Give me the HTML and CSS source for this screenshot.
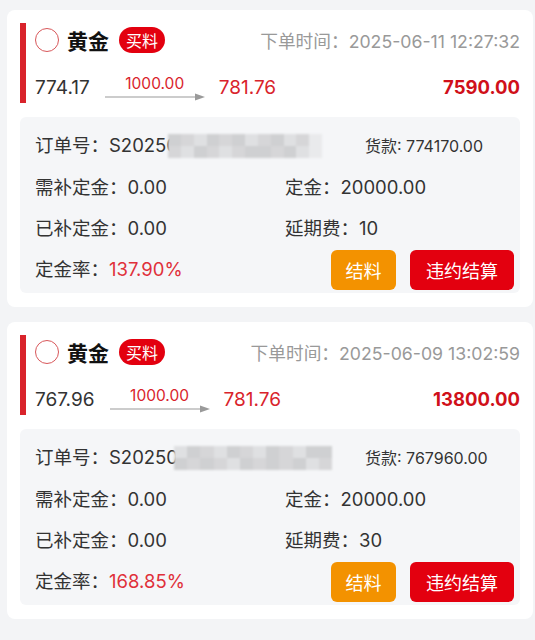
FILE: index.html
```html
<!DOCTYPE html>
<html lang="zh-CN">
<head>
<meta charset="utf-8">
<link rel="stylesheet" href="styles.css">
</head>
<body>
<div class="list">
  <div class="card">
    <div class="head">
      <div class="title-row">
        <span class="circle"></span>
        <span class="name">黄金</span>
        <span class="badge">买料</span>
        <span class="time">下单时间：2025-06-11 12:27:32</span>
      </div>
      <div class="price-row">
        <span class="open">774.17</span>
        <span class="arrow">
          <span class="qty">1000.00</span>
          <svg class="arrow-svg" width="100" height="8" viewBox="0 0 100 8"><line x1="0" y1="4" x2="92" y2="4" stroke="#9a9a9a" stroke-width="1.2"/><polygon points="90,0.5 100,4 90,7.5" fill="#9a9a9a"/></svg>
        </span>
        <span class="now">781.76</span>
        <span class="total">7590.00</span>
      </div>
    </div>
    <div class="box">
      <div class="row">
        <div class="cell">订单号：S2025<span class="tail">0</span><span class="mosaic m-a"><i class="g2"></i><i class="g1"></i><i class="g3"></i><i class="g2"></i><i class="g1"></i><i class="g2"></i><i class="g3"></i><i class="g1"></i><i class="g2"></i><i class="g3"></i><i class="g1"></i><i class="g4"></i><i class="g1"></i><i class="g3"></i><i class="g2"></i><i class="g1"></i><i class="g3"></i><i class="g1"></i><i class="g2"></i><i class="g2"></i><i class="g1"></i><i class="g2"></i><i class="g3"></i><i class="g4"></i></span></div>
        <div class="cell small-cell"><span class="small">货款: 774170.00</span></div>
      </div>
      <div class="row">
        <div class="cell">需补定金：0.00</div>
        <div class="cell">定金：20000.00</div>
      </div>
      <div class="row">
        <div class="cell">已补定金：0.00</div>
        <div class="cell">延期费：10</div>
      </div>
      <div class="row last">
        <div class="cell">定金率：<span class="rate">137.90%</span></div>
        <div class="btns">
          <span class="btn btn-orange">结料</span>
          <span class="btn btn-red">违约结算</span>
        </div>
      </div>
    </div>
  </div>

  <div class="card">
    <div class="head">
      <div class="title-row">
        <span class="circle"></span>
        <span class="name">黄金</span>
        <span class="badge">买料</span>
        <span class="time">下单时间：2025-06-09 13:02:59</span>
      </div>
      <div class="price-row">
        <span class="open">767.96</span>
        <span class="arrow">
          <span class="qty">1000.00</span>
          <svg class="arrow-svg" width="100" height="8" viewBox="0 0 100 8"><line x1="0" y1="4" x2="92" y2="4" stroke="#9a9a9a" stroke-width="1.2"/><polygon points="90,0.5 100,4 90,7.5" fill="#9a9a9a"/></svg>
        </span>
        <span class="now">781.76</span>
        <span class="total">13800.00</span>
      </div>
    </div>
    <div class="box">
      <div class="row">
        <div class="cell">订单号：S2025<span class="tail">0</span><span class="mosaic m-b"><i class="g3"></i><i class="g2"></i><i class="g1"></i><i class="g3"></i><i class="g2"></i><i class="g1"></i><i class="g3"></i><i class="g2"></i><i class="g1"></i><i class="g3"></i><i class="g2"></i><i class="g2"></i><i class="g2"></i><i class="g1"></i><i class="g2"></i><i class="g1"></i><i class="g3"></i><i class="g2"></i><i class="g1"></i><i class="g2"></i><i class="g1"></i><i class="g2"></i><i class="g3"></i><i class="g1"></i></span></div>
        <div class="cell small-cell"><span class="small">货款: 767960.00</span></div>
      </div>
      <div class="row">
        <div class="cell">需补定金：0.00</div>
        <div class="cell">定金：20000.00</div>
      </div>
      <div class="row">
        <div class="cell">已补定金：0.00</div>
        <div class="cell">延期费：30</div>
      </div>
      <div class="row last">
        <div class="cell">定金率：<span class="rate">168.85%</span></div>
        <div class="btns">
          <span class="btn btn-orange">结料</span>
          <span class="btn btn-red">违约结算</span>
        </div>
      </div>
    </div>
  </div>
</div>
</body>
</html>
```
FILE: styles.css
```css
* { box-sizing: border-box; }
html, body {
  margin: 0;
  padding: 0;
  background: #f3f4f6;
}
body {
  font-family: "Inter", "Noto Sans CJK SC", sans-serif;
  color: #333;
  width: 535px;
  overflow: hidden;
}
.list {
  padding: 10px 2px 0 7px;
}
.card {
  background: #fff;
  border-radius: 8px;
  padding: 13px 13px 14px 13px;
  margin-bottom: 15px;
}
.head {
  border-left: 6px solid #d9232b;
  height: 80px;
  display: flex;
  flex-direction: column;
}
.title-row {
  height: 34px;
  display: flex;
  align-items: center;
  padding-left: 9px;
}
.circle {
  width: 24px;
  height: 24px;
  border: 1.5px solid #d8575a;
  border-radius: 50%;
  flex: none;
}
.name {
  margin-left: 8px;
  font-size: 21px;
  font-weight: 700;
  color: #111;
  font-family: "Noto Sans CJK SC", sans-serif;
}
.badge {
  margin-left: 10px;
  background: #e3000f;
  color: #fff;
  font-size: 16px;
  line-height: 26px;
  height: 26px;
  padding: 0 7px;
  border-radius: 13px;
  font-family: "Noto Sans CJK SC", sans-serif;
}
.time {
  margin-left: auto;
  font-size: 17.7px;
  color: #999;
}
.price-row {
  margin-top: 14px;
  height: 32px;
  display: flex;
  align-items: center;
  padding-left: 9px;
  font-size: 19px;
}
.open { color: #333; }
.arrow {
  display: inline-flex;
  flex-direction: column;
  align-items: center;
  margin: 0 14px 0 15px;
  position: relative;
  top: 1px;
}
.qty {
  font-size: 15.5px;
  color: #d9232b;
  line-height: 16px;
}
.arrow-svg { display: block; margin-top: 1px; }
.now { color: #d9232b; }
.total {
  margin-left: auto;
  color: #d0101a;
  font-weight: 700;
  font-size: 18.5px;
}
.box {
  margin-top: 14px;
  background: #f5f6f8;
  border-radius: 6px;
  padding: 7px 6px 5px 15px;
}
.row {
  display: grid;
  grid-template-columns: 250px 1fr;
  height: 41px;
  align-items: center;
  font-size: 18.5px;
}
.cell { white-space: nowrap; }
.small-cell { padding-left: 80px; }
.small { font-size: 16px; }
.tail { display: inline-block; }
.mosaic {
  display: inline-grid;
  grid-template-columns: repeat(12, 1fr);
  grid-template-rows: 12px 12px;
  vertical-align: middle;
  width: 154px;
  margin-left: -10px;
  filter: blur(1px);
}
.mosaic i { display: block; }
.m-b { width: 158px; margin-left: -4px; }
.g1 { background: #d6d6d8; }
.g2 { background: #cfd0d2; }
.g3 { background: #dfe0e2; }
.g4 { background: #e9eaec; }
.rate { color: #e0303a; }
.row.last {
  display: flex;
  justify-content: space-between;
}
.btns {
  display: flex;
  gap: 14px;
  margin-top: 4px;
}
.btn {
  height: 40px;
  line-height: 40px;
  border-radius: 6px;
  color: #fff;
  font-size: 18px;
  text-align: center;
  font-family: "Noto Sans CJK SC", sans-serif;
}
.btn-orange { background: #f39200; width: 65px; }
.btn-red { background: #e3000f; width: 104px; }
```
